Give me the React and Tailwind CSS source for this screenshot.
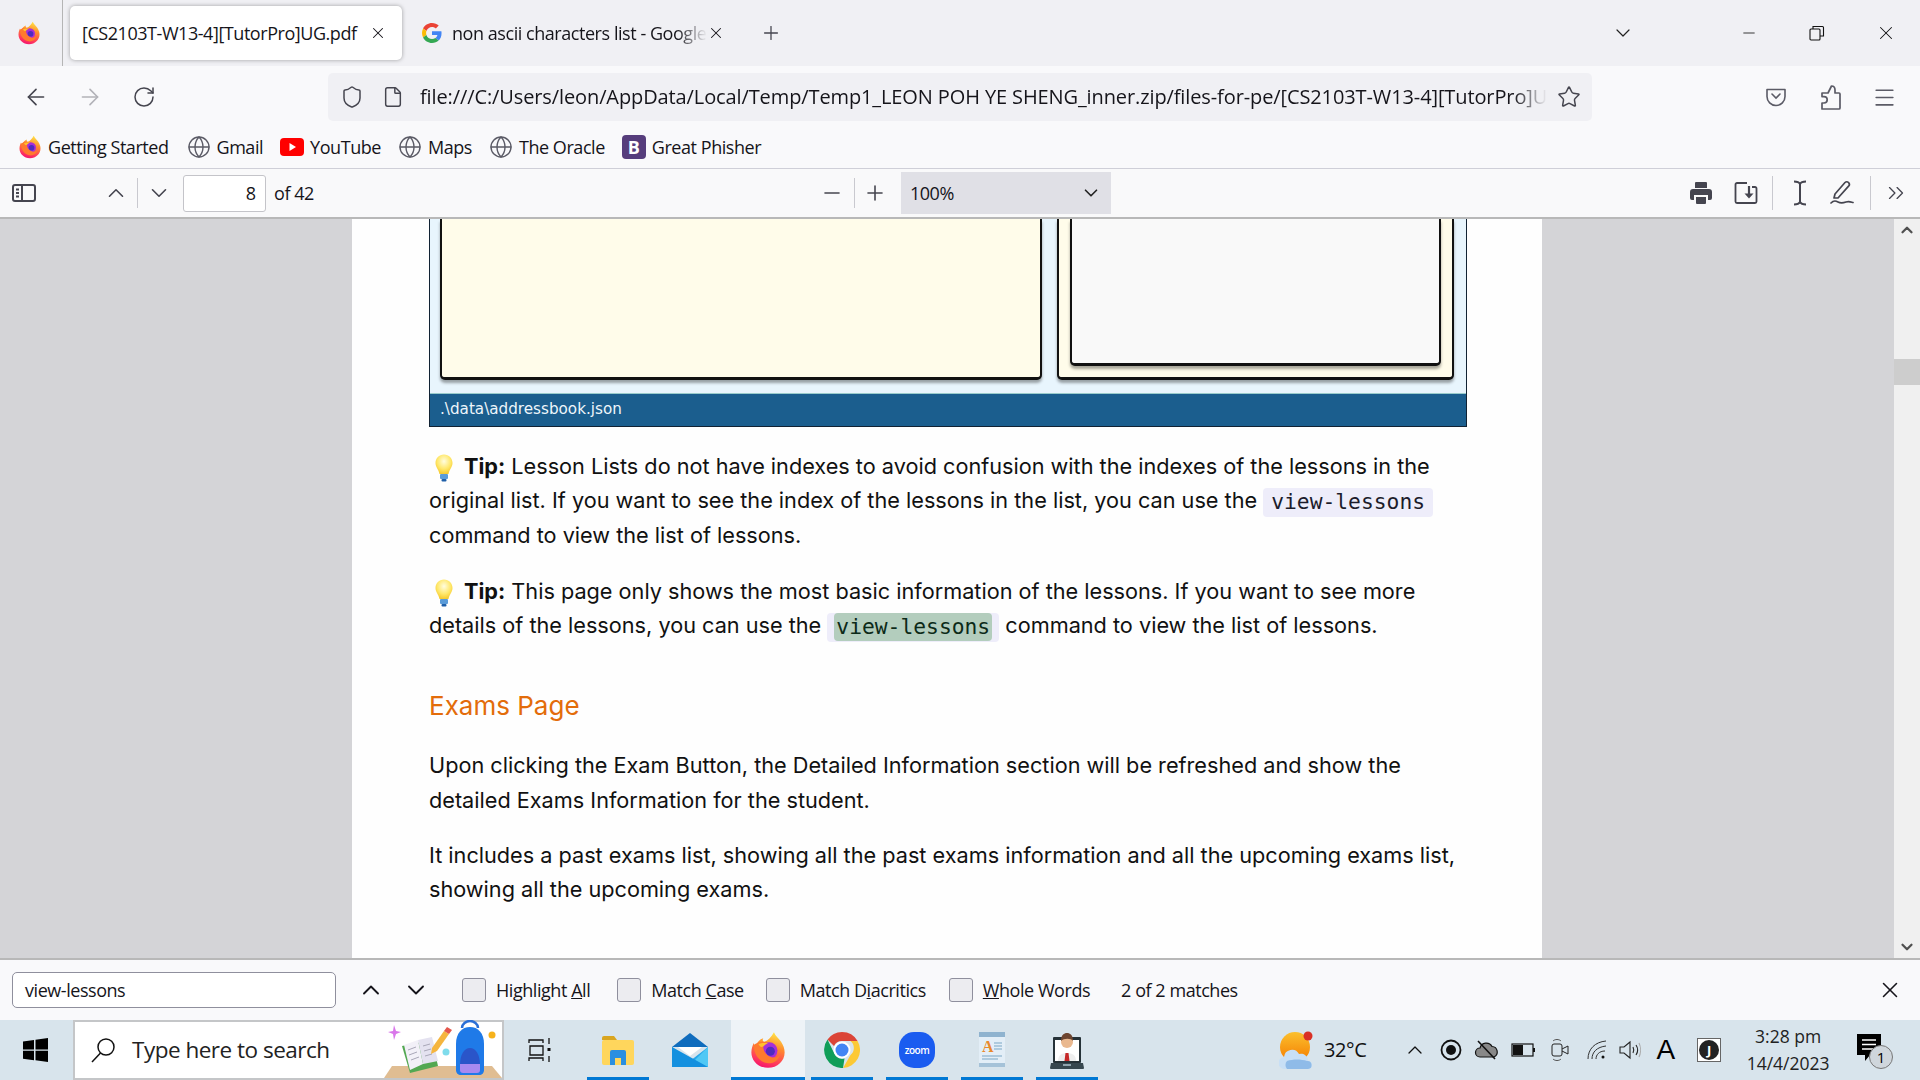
import { ArrowLeft, ArrowRight, RotateCw, Shield, File, Star, Menu, ChevronUp, ChevronDown, Plus, Minus, X, Globe, ChevronsRight } from "lucide-react";

function FirefoxLogo({ size = 24 }) {
  return (
    <svg width={size} height={size} viewBox="0 0 32 32">
      <defs>
        <linearGradient id="ffa" x1="0.7" y1="0" x2="0.4" y2="1">
          <stop offset="0" stopColor="#ffe847" />
          <stop offset="0.4" stopColor="#ff8a2e" />
          <stop offset="0.8" stopColor="#ff3b5c" />
          <stop offset="1" stopColor="#f5156c" />
        </linearGradient>
      </defs>
      <path d="M21 1c1 3 4 5 6 8 2 3 3 6 3 9 0 7-6 13-14 13S2 25 2 18c0-3 1-6 2-8 0 1 1 2 2 2 1-3 3-5 6-6-1 2 0 3 1 3 3-1 6-4 8-8z" fill="url(#ffa)" />
      <circle cx="17" cy="16.500" r="7" fill="#a62fd8" />
      <circle cx="18" cy="17" r="3.800" fill="#4f2bc0" />
      <path d="M4 12c3-3 8-4 12-2-3 0-4 2-4 3 0 4 3 8 7 9 3 1 5 0 7-2-1 5-6 8-11 7C9 26 4 20 4 12z" fill="#ff7a2e" />
      <path d="M8 11c2-1 5-1 8-1-2 1-3 2-4 3-2 1-3 0-4-2z" fill="#ffc02e" />
    </svg>
  );
}

function GoogleG() {
  return (
    <svg width="20" height="20" viewBox="0 0 48 48">
      <path fill="#EA4335" d="M24 9.500c3.500 0 6.700 1.300 9.200 3.400l6.900-6.900C35.900 2.400 30.300 0 24 0 14.600 0 6.500 5.400 2.600 13.200l8 6.200C12.500 13.700 17.800 9.500 24 9.500z" />
      <path fill="#4285F4" d="M46.900 24.500c0-1.600-.1-3.100-.4-4.500H24v9h12.900c-.6 3-2.200 5.500-4.800 7.200l7.700 6c4.500-4.200 7.100-10.300 7.100-17.700z" />
      <path fill="#FBBC05" d="M10.600 28.600c-.5-1.400-.8-3-.8-4.600s.3-3.200.8-4.600l-8-6.200C.9 16.500 0 20.100 0 24s.9 7.500 2.600 10.800l8-6.200z" />
      <path fill="#34A853" d="M24 48c6.500 0 11.900-2.100 15.800-5.800l-7.700-6c-2.100 1.400-4.900 2.300-8.100 2.300-6.200 0-11.500-4.200-13.400-9.900l-8 6.200C6.500 42.600 14.600 48 24 48z" />
    </svg>
  );
}

function SidebarIcon() {
  return (
    <svg width="24" height="18" viewBox="0 0 24 18" fill="none" stroke="#45454f" strokeWidth="2">
      <rect x="1" y="1" width="22" height="16" rx="2" />
      <path d="M10 1v16M4 5.500h3M4 9h3M4 12.500h3" />
    </svg>
  );
}

function Pocket() {
  return (
    <svg width="22" height="22" viewBox="0 0 22 22" fill="none" stroke="#5b5b66" strokeWidth="1.600">
      <path d="M2 3.500h18v7a9 9 0 0 1-18 0z" strokeLinejoin="round" />
      <path d="M7 8l4 4 4-4" strokeLinecap="round" />
    </svg>
  );
}

function ExtensionIcon() {
  return (
    <svg width="24" height="26" viewBox="0 0 24 26" fill="none" stroke="#5b5b66" strokeWidth="1.700" strokeLinejoin="round">
      <path d="M3 9h6l3.500-7c2.500 0 3.500 2 3.500 4v3h4a1 1 0 0 1 1 1v14a1 1 0 0 1-1 1H3v-6h2a3.200 3.200 0 0 0 0-6.400H3z" />
    </svg>
  );
}

function PrinterIcon() {
  return (
    <svg width="22" height="24" viewBox="0 0 22 24" fill="#45454f">
      <path d="M6 1h10a1 1 0 0 1 1 1v5H5V2a1 1 0 0 1 1-1z" />
      <path d="M3 8h16a3 3 0 0 1 3 3v6a2 2 0 0 1-2 2h-2v-5H4v5H2a2 2 0 0 1-2-2v-6a3 3 0 0 1 3-3z" />
      <path d="M6 16h10v6a1 1 0 0 1-1 1H7a1 1 0 0 1-1-1z" />
    </svg>
  );
}

function SavePdfIcon() {
  return (
    <svg width="24" height="24" viewBox="0 0 24 24" fill="none" stroke="#45454f" strokeWidth="1.800">
      <path d="M13 2H3a1.500 1.500 0 0 0-1.500 1.500v17A1.500 1.500 0 0 0 3 22h18a1.500 1.500 0 0 0 1.500-1.500V7.500A1.500 1.500 0 0 0 21 6h-3" />
      <path d="M15 5v9" strokeWidth="2.200" />
      <path d="M10.500 12.500h9L15 17.500z" fill="#45454f" stroke="none" />
    </svg>
  );
}

function TextCursorIcon() {
  return (
    <svg width="16" height="26" viewBox="0 0 16 26" fill="none" stroke="#45454f" strokeWidth="2">
      <path d="M2 1.500c3 0 5 .5 6 2.500 1-2 3-2.500 6-2.500M8 4v18M2 24.500c3 0 5-.5 6-2.500 1 2 3 2.500 6 2.500" />
    </svg>
  );
}

function DrawIcon() {
  return (
    <svg width="24" height="26" viewBox="0 0 24 26" fill="none" stroke="#45454f" strokeWidth="1.700" strokeLinejoin="round">
      <path d="M4 18l1-4L15 2.500c1-1 2.500-1 3.500 0s1.200 2.300.3 3.400L8 18z" />
      <path d="M1 23c3-3 5-2 7-1s5 1 8 0 5 0 7 .5" strokeLinecap="round" />
    </svg>
  );
}

function Bulb() {
  return (
    <svg width="24" height="28" viewBox="0 0 24 28" className="block">
      <defs>
        <radialGradient id="bulb" cx="0.5" cy="0.35" r="0.65">
          <stop offset="0" stopColor="#fffde0" />
          <stop offset="0.6" stopColor="#ffe86b" />
          <stop offset="1" stopColor="#f5c92e" />
        </radialGradient>
      </defs>
      <path d="M12 0.500c5 0 8.500 3.700 8.500 8.500 0 4-3 6-4 11h-9c-1-5-4-7-4-11C3.500 4.200 7 .5 12 .5z" fill="url(#bulb)" />
      <rect x="8" y="20" width="8" height="5" rx="1" fill="#5a9bd8" />
      <rect x="9.500" y="25" width="5" height="2.500" rx="1" fill="#1f5fa8" />
    </svg>
  );
}

function WinLogo() {
  return (
    <svg width="25" height="24" viewBox="0 0 25 24" fill="#000">
      <path d="M0 3.500l11-1.500v9.500H0zM12.500 1.800L25 0v11.500H12.500zM0 12.800h11v9.500L0 20.800zM12.500 12.800H25V24l-12.500-1.800z" />
    </svg>
  );
}

function SearchGlass() {
  return (
    <svg width="26" height="26" viewBox="0 0 26 26" fill="none" stroke="#111" strokeWidth="1.500">
      <circle cx="16" cy="10" r="8" />
      <path d="M10.500 16L2 25" />
    </svg>
  );
}

function SearchArt() {
  return (
    <svg width="118" height="58" viewBox="0 0 118 58" className="block">
      <path d="M0 58l8-12h100l10 12z" fill="#e0bd92" />
      <path d="M10 5l2 6 5 1-5 2-2 6-1-6-5-2 5-1z" fill="#d977ea" />
      <path d="M18 26l30-6 6 26-28 7z" fill="#53a852" />
      <path d="M20 25l14-5 5 24-13 6z" fill="#f2f0f8" />
      <path d="M34 20l14-3 6 24-15 3z" fill="#e4e2f0" />
      <path d="M24 30l8-3M25 35l8-3M27 40l8-3M39 26l7-2M40 31l7-2M41 36l7-2" stroke="#a9a7b8" strokeWidth="1" />
      <path d="M48 28l12-17 5 3-12 17-6 3z" fill="#f5b53f" />
      <path d="M60 11l3-4 5 3-3 4z" fill="#e4574c" />
      <circle cx="62" cy="32" r="3.500" fill="#7fdcec" />
      <path d="M78 8c0-4 4-7 8-7s8 3 8 7" fill="none" stroke="#2b6fd6" strokeWidth="2.500" />
      <path d="M72 24c0-11 6-17 14-17s14 6 14 17v26c0 3-2 5-5 5H77c-3 0-5-2-5-5z" fill="#1f7ae8" />
      <path d="M76 45c0-10 4-17 10-17s10 7 10 17v5H76z" fill="#2a55c9" />
      <path d="M76 44h20v6c0 2-1 3-3 3H79c-2 0-3-1-3-3z" fill="#a88af0" />
      <circle cx="108" cy="15" r="3.500" fill="#f6b21b" />
    </svg>
  );
}

function TaskView() {
  return (
    <svg width="26" height="26" viewBox="0 0 26 26" fill="none" stroke="#111" strokeWidth="1.300">
      <path d="M2 6V3h14v3M3 9h13v9H3zM2 24v-3h14v3" />
      <path d="M22 1v6M22 19v6" />
      <rect x="20.500" y="11" width="3" height="3" fill="#111" stroke="none" />
    </svg>
  );
}

function ExplorerIcon() {
  return (
    <svg width="32" height="30" viewBox="0 0 32 30">
      <path d="M0 3a2 2 0 0 1 2-2h10l3 4H0z" fill="#d9a520" />
      <rect x="0" y="5" width="32" height="25" rx="2" fill="#ffd65c" />
      <path d="M8 30V17a2 2 0 0 1 2-2h12a2 2 0 0 1 2 2v13h-5v-7h-6v7z" fill="#2a8fe0" />
    </svg>
  );
}

function MailIcon() {
  return (
    <svg width="36" height="34" viewBox="0 0 36 34">
      <path d="M18 0l18 14H0z" fill="#0f6cbd" />
      <path d="M6 14h24l-12 9z" fill="#fff" />
      <path d="M0 14l18 14 18-14v20H0z" fill="#28a8ea" />
      <path d="M36 14v20H16z" fill="#50c8f5" />
      <path d="M0 14v20h36L18 24z" fill="#1490df" />
    </svg>
  );
}

function ChromeIcon() {
  return (
    <svg width="36" height="36" viewBox="0 0 36 36">
      <path d="M18 0a18 18 0 0 1 15.600 9H18a9 9 0 0 0-8 5L3.500 7.500A18 18 0 0 1 18 0z" fill="#db4437" />
      <path d="M33.600 9A18 18 0 0 1 19 36l7.500-13a9 9 0 0 0 0-14z" fill="#fcc934" />
      <path d="M3.500 7.500L10.500 22a9 9 0 0 0 10 4.500L19 36A18 18 0 0 1 3.500 7.500z" fill="#0f9d58" />
      <circle cx="18" cy="18" r="8.500" fill="#fff" />
      <circle cx="18" cy="18" r="6.500" fill="#4285f4" />
    </svg>
  );
}

function ZoomIcon() {
  return (
    <div className="flex h-[36px] w-[36px] items-center justify-center rounded-[15px] bg-[#1a5cf0] text-[10px] font-semibold tracking-tighter text-white">
      zoom
    </div>
  );
}

function NotesIcon() {
  return (
    <svg width="28" height="36" viewBox="0 0 28 36">
      <rect x="1" y="1" width="26" height="34" rx="1" fill="#e3eef7" />
      <rect x="1" y="0" width="26" height="5" fill="#8fb3cf" />
      <rect x="1" y="31" width="26" height="4" fill="#a5c2d8" />
      <text x="4" y="20" fontSize="16" fontFamily="Liberation Serif" fontWeight="700" fill="#e98a2c">A</text>
      <path d="M16 11h8M16 14h8M16 17h8M4 24h20M4 27h16" stroke="#7ba5c6" strokeWidth="1.200" />
    </svg>
  );
}

function PersonIcon() {
  return (
    <svg width="34" height="38" viewBox="0 0 34 38">
      <rect x="3" y="6" width="28" height="26" rx="1" fill="#263238" />
      <rect x="5" y="9" width="24" height="21" fill="#fff" />
      <path d="M8 30c0-6 4-8 9-8s9 2 9 8z" fill="#eee" />
      <path d="M15.500 22h3l1 8h-5z" fill="#c62828" />
      <circle cx="17" cy="11" r="6" fill="#e9b88f" />
      <path d="M11 10c0-6 3-8 6-8s6 2 6 8c-2-3-9-3-12 0z" fill="#6d4530" />
      <path d="M1 32h32l1 5a1 1 0 0 1-1 1H1a1 1 0 0 1-1-1z" fill="#37474f" />
      <rect x="13" y="33" width="8" height="2" fill="#90a4ae" />
    </svg>
  );
}

function WeatherIcon() {
  return (
    <svg width="36" height="38" viewBox="0 0 36 38">
      <defs>
        <linearGradient id="sun" x1="0" y1="0" x2="0" y2="1">
          <stop offset="0" stopColor="#fbc02d" />
          <stop offset="1" stopColor="#f57c00" />
        </linearGradient>
      </defs>
      <circle cx="16" cy="16" r="15" fill="url(#sun)" />
      <circle cx="29" cy="5" r="4.500" fill="#d93025" />
      <path d="M6 38a6 6 0 0 1-1-12 8 8 0 0 1 15-3 7 7 0 0 1 9 7 4 4 0 0 1 0 8z" fill="#c8dff5" />
      <path d="M8 38a6 6 0 0 1 0-8c6-2 14-2 20 0a4 4 0 0 1 1 8z" fill="#8fbbe8" />
    </svg>
  );
}

function TrayRecord() {
  return (
    <svg width="22" height="22" viewBox="0 0 22 22" fill="none">
      <circle cx="11" cy="11" r="9.500" stroke="#111" strokeWidth="1.800" />
      <circle cx="11" cy="11" r="5" fill="#111" />
    </svg>
  );
}

function TrayCloud() {
  return (
    <svg width="26" height="20" viewBox="0 0 26 20" fill="#888" stroke="#111" strokeWidth="1.200">
      <path d="M6 17a4.500 4.500 0 0 1 0-9 6.500 6.500 0 0 1 12-1.500A5.500 5.500 0 0 1 20 17z" />
      <path d="M4 1l17 18" fill="none" strokeWidth="1.600" />
    </svg>
  );
}

function TrayBattery() {
  return (
    <svg width="24" height="14" viewBox="0 0 24 14" fill="none">
      <rect x="1" y="1" width="21" height="12" stroke="#111" strokeWidth="1.200" />
      <rect x="2" y="2" width="10" height="10" fill="#111" />
      <rect x="22" y="5" width="2" height="4" fill="#111" />
    </svg>
  );
}

function TrayCamera() {
  return (
    <svg width="18" height="24" viewBox="0 0 18 24" fill="none" stroke="#222" strokeWidth="1">
      <rect x="1" y="6" width="10" height="12" rx="2" />
      <path d="M11 11l6-3v8l-6-3" />
      <path d="M2 3c2-2 6-2 8 0M2 21c2 2 6 2 8 0" stroke="#555" />
    </svg>
  );
}

function TrayWifi() {
  return (
    <svg width="20" height="20" viewBox="0 0 20 20" fill="none" stroke="#333" strokeWidth="1">
      <path d="M1 19C1 9 8 2 19 1M5 19c0-7 5-12 14-13M9 19c0-4 3-8 9-8" />
      <circle cx="16" cy="17" r="1.500" fill="#111" stroke="none" />
    </svg>
  );
}

function TraySpeaker() {
  return (
    <svg width="22" height="20" viewBox="0 0 22 20" fill="none" stroke="#222" strokeWidth="1.100">
      <path d="M1 7h4l6-5v16l-6-5H1z" />
      <path d="M14 7c1 2 1 4 0 6M17 5c2 3 2 7 0 10" />
      <path d="M20 3c2 4 2 10 0 14" stroke="#aaa" />
    </svg>
  );
}

function TrayJ() {
  return (
    <div className="flex h-[24px] w-[24px] items-center justify-center border border-[#666] bg-white">
      <div className="flex h-[20px] w-[20px] items-center justify-center rounded-full bg-[#222] text-[13px] font-bold leading-none text-white">J</div>
    </div>
  );
}

function NotificationIcon() {
  return (
    <div className="relative h-[32px] w-[30px]">
      <svg width="24" height="28" viewBox="0 0 24 28">
        <path d="M0 0h24v21H13l-5 6v-6H0z" fill="#000" />
        <path d="M5 6h14M5 10.500h14M5 15h14" stroke="#fff" strokeWidth="1.300" />
      </svg>
      <div className="absolute left-[12px] top-[11px] flex h-[24px] w-[24px] items-center justify-center rounded-full border border-[#777] bg-[#cfd6dc] text-[15px] text-black">1</div>
    </div>
  );
}

function Sep({ className = "" }) {
  return <div className={`w-px bg-[#c9c9cf] ${className}`} />;
}

function Bookmark({ icon, label, className = "" }) {
  return (
    <div className={`flex items-center gap-[6px] ${className}`}>
      {icon}
      <span className="text-[18px] tracking-[-0.45px] text-[#15141a]">{label}</span>
    </div>
  );
}

function FindCheck({ before, u, after, className = "" }) {
  return (
    <label className={`flex shrink-0 items-center gap-[10px] ${className}`}>
      <span className="h-[24px] w-[24px] rounded-[3px] border border-[#8f8f9d] bg-[#ececf0]" />
      <span className="whitespace-nowrap text-[18px] tracking-[-0.45px] text-[#15141a]">
        {before}
        <span className="underline">{u}</span>
        {after}
      </span>
    </label>
  );
}

function TaskIcon({ children, width, running, active }) {
  return (
    <div className={`relative flex h-full shrink-0 items-center justify-center ${active ? "bg-[#eef3f7]" : ""}`} style={{ width }}>
      {children}
      {running && <div className="absolute inset-x-0 bottom-0 h-[3px] bg-[#0078d4]" />}
    </div>
  );
}

function CodePill({ highlight }) {
  return (
    <span className={`-my-[4px] inline-block h-[29px] rounded-[4px] bg-[#eeedfa] align-middle font-['DejaVu_Sans_Mono',monospace] text-[21.300px] leading-[28px] text-[#1c1c2b] ${highlight ? "px-[7px]" : "px-[8px]"}`}>
      {highlight ? <span className="inline-block h-[28px] rounded-[4px] bg-[#b3cdbd] px-[2px] leading-[27px] text-[#0c2a18]">view-lessons</span> : "view-lessons"}
    </span>
  );
}

function TipBulb() {
  return (
    <span className="-my-[6px] ml-[3px] mr-[8px] inline-block align-middle">
      <Bulb />
    </span>
  );
}

function ScreenshotCrop() {
  return (
    <div className="flex h-[208px] w-[1038px] flex-col border-x border-b border-[#123] bg-[#e8f5fd]">
      <div className="flex h-[175px] shrink-0 gap-[15px] border-b border-[#9cc] pl-[10px] pr-[12px]">
        <div className="h-[161px] w-[602px] rounded-b-[5px] border-x-2 border-b-[3px] border-[#111] bg-[#fffcea] shadow-[0_3px_3px_rgba(0,0,0,0.35)]" />
        <div className="h-[161px] flex-1 rounded-b-[5px] border-x-2 border-b-[3px] border-[#111] bg-[#fffcea] px-[11px] shadow-[0_3px_3px_rgba(0,0,0,0.35)]">
          <div className="h-[147px] rounded-b-[5px] border-x-2 border-b-[3px] border-[#111] bg-[#f9f9f9] shadow-[0_3px_3px_rgba(0,0,0,0.35)]" />
        </div>
      </div>
      <div className="flex min-h-0 flex-1 items-center bg-[#1b5e8e] pl-[10px] font-['DejaVu_Sans',sans-serif] text-[15.200px] leading-none text-[#eef6fb]">
        .\data\addressbook.json
      </div>
    </div>
  );
}

export default function App() {
  return (
    <div className="flex h-[1080px] w-[1920px] flex-col overflow-hidden bg-white font-['Open_Sans','Noto_Sans',sans-serif]">
      {/* Tab strip */}
      <div className="flex h-[66px] shrink-0 items-center bg-[#f0f0f4]">
        <div className="flex h-full w-[63px] items-center justify-center border-r border-[#b5b5b5] pr-[4px]">
          <FirefoxLogo size={24} />
        </div>
        <div className="ml-[7px] flex h-[54px] w-[332px] items-center rounded-[5px] bg-white pl-[12px] shadow-[0_0_4px_rgba(0,0,0,0.35)]">
          <span className="w-[287px] whitespace-nowrap text-[18px] tracking-[-0.45px] text-[#15141a]">[CS2103T-W13-4][TutorPro]UG.pdf</span>
          <X size={18} strokeWidth={1.4} color="#15141a" />
        </div>
        <div className="ml-[20px] flex items-center">
          <GoogleG />
          <span className="ml-[10px] w-[255px] overflow-hidden whitespace-nowrap text-[18px] tracking-[-0.45px] text-[#15141a] [mask-image:linear-gradient(to_right,black_88%,transparent)]">non ascii characters list - Google Search</span>
          <X size={18} strokeWidth={1.4} color="#15141a" />
        </div>
        <Plus size={22} strokeWidth={1.4} color="#45454f" className="ml-[35px]" />
        <ChevronDown size={24} strokeWidth={1.2} color="#222" className="ml-[829px]" />
        <Minus size={18} strokeWidth={1.1} color="#111" className="ml-[105px]" />
        <svg width="16" height="16" viewBox="0 0 16 16" fill="none" stroke="#111" strokeWidth="1.100" className="ml-[51px]">
          <rect x="1" y="4" width="10" height="11" rx="1" />
          <path d="M4 4V1.500h9.500a1 1 0 0 1 1 1V11H11" />
        </svg>
        <X size={22} strokeWidth={1.1} color="#111" className="ml-[50px]" />
      </div>

      {/* Nav bar */}
      <div className="flex h-[58px] shrink-0 items-center bg-[#f9f9fb] pt-[4px]">
        <ArrowLeft size={26} strokeWidth={1.5} color="#45454f" className="ml-[23px]" />
        <ArrowRight size={26} strokeWidth={1.5} color="#b2b2b8" className="ml-[28px]" />
        <RotateCw size={24} strokeWidth={1.5} color="#45454f" className="ml-[29px]" />
        <div className="ml-[172px] flex h-[48px] w-[1264px] shrink-0 items-center rounded-[5px] bg-[#f0f0f4] pl-[12px]">
          <Shield size={24} strokeWidth={1.5} color="#45454f" />
          <File size={22} strokeWidth={1.6} color="#45454f" className="ml-[18px]" />
          <span className="ml-[16px] w-[1127px] overflow-hidden whitespace-nowrap text-[20px] tracking-[-0.11px] text-[#15141a] [mask-image:linear-gradient(to_right,black_97%,transparent)]">file:///C:/Users/leon/AppData/Local/Temp/Temp1_LEON POH YE SHENG_inner.zip/files-for-pe/[CS2103T-W13-4][TutorPro]UG.pdf</span>
          <Star size={24} strokeWidth={1.5} color="#45454f" className="ml-[10px]" />
        </div>
        <div className="ml-[173px]"><Pocket /></div>
        <div className="ml-[32px]"><ExtensionIcon /></div>
        <Menu size={25} strokeWidth={1.6} color="#5b5b66" className="ml-[29px]" />
      </div>

      {/* Bookmarks */}
      <div className="flex h-[45px] shrink-0 items-center border-b border-[#cfcfd8] bg-[#f9f9fb] pl-[18px] pt-[2px]">
        <Bookmark icon={<FirefoxLogo size={24} />} label="Getting Started" />
        <Bookmark icon={<Globe size={24} strokeWidth={1.4} color="#5b5b66" />} label="Gmail" className="ml-[18px]" />
        <Bookmark
          icon={
            <svg width="24" height="18" viewBox="0 0 24 18">
              <rect width="24" height="18" rx="4" fill="#f00" />
              <path d="M9.500 5l6.500 4-6.500 4z" fill="#fff" />
            </svg>
          }
          label="YouTube"
          className="ml-[17px]"
        />
        <Bookmark icon={<Globe size={24} strokeWidth={1.4} color="#5b5b66" />} label="Maps" className="ml-[17px]" />
        <Bookmark icon={<Globe size={24} strokeWidth={1.4} color="#5b5b66" />} label="The Oracle" className="ml-[17px]" />
        <Bookmark
          icon={<span className="flex h-[24px] w-[24px] items-center justify-center rounded-[4px] bg-[#563d7c] text-[18px] font-bold leading-none text-white">B</span>}
          label="Great Phisher"
          className="ml-[17px]"
        />
      </div>

      {/* PDF toolbar */}
      <div className="flex h-[50px] shrink-0 items-center border-b-[2px] border-[#b8b8b8] bg-[#f9f9fa]">
        <div className="ml-[12px]"><SidebarIcon /></div>
        <ChevronUp size={26} strokeWidth={1.5} color="#45454f" className="ml-[67px]" />
        <Sep className="ml-[8px] h-[30px]" />
        <ChevronDown size={26} strokeWidth={1.5} color="#45454f" className="ml-[8px]" />
        <div className="ml-[11px] flex h-[37px] w-[83px] items-center justify-end rounded-[3px] border border-[#c4c4c9] bg-white pr-[9px] text-[18px] text-[#15141a]">8</div>
        <span className="ml-[8px] text-[18px] tracking-[-0.45px] text-[#15141a]">of 42</span>
        <Minus size={24} strokeWidth={1.6} color="#45454f" className="ml-[506px]" />
        <Sep className="ml-[10px] h-[30px]" />
        <Plus size={24} strokeWidth={1.6} color="#45454f" className="ml-[8px]" />
        <div className="ml-[14px] flex h-[42px] w-[210px] shrink-0 items-center justify-between bg-[#e0e0e6] pl-[9px] pr-[9px] text-[18px] tracking-[-0.45px] text-[#15141a]">
          100%
          <ChevronDown size={22} strokeWidth={1.8} color="#222" />
        </div>
        <div className="ml-[579px]"><PrinterIcon /></div>
        <div className="ml-[22px]"><SavePdfIcon /></div>
        <Sep className="ml-[14px] h-[34px]" />
        <div className="ml-[19px]"><TextCursorIcon /></div>
        <div className="ml-[22px]"><DrawIcon /></div>
        <Sep className="ml-[16px] h-[34px]" />
        <ChevronsRight size={26} strokeWidth={1.2} color="#45454f" className="ml-[12px]" />
      </div>

      {/* Viewer */}
      <div className="flex min-h-0 flex-1 bg-[#d4d4d7]">
        <div className="flex flex-1 justify-center">
          <div className="h-full w-[1190px] bg-[#fefefe] pl-[77px] pr-[74px] font-['Inter',sans-serif] text-[21.680px] leading-[34.300px] text-[#111]">
            <ScreenshotCrop />
            <p className="mt-[22px] w-[1039px]">
              <TipBulb />
              <strong className="font-bold">Tip:</strong> Lesson Lists do not have indexes to avoid confusion with the indexes of the lessons in the original list. If you want to see the index of the lessons in the list, you can use the <CodePill /> command to view the list of lessons.
            </p>
            <p className="mt-[22px] w-[1039px]">
              <TipBulb />
              <strong className="font-bold">Tip:</strong> This page only shows the most basic information of the lessons. If you want to see more details of the lessons, you can use the <CodePill highlight /> command to view the list of lessons.
            </p>
            <h2 className="mt-[44px] text-[26px] leading-[40px] text-[#e36c0a]">Exams Page</h2>
            <p className="mt-[22px]">Upon clicking the Exam Button, the Detailed Information section will be refreshed and show the detailed Exams Information for the student.</p>
            <p className="mt-[21px]">It includes a past exams list, showing all the past exams information and all the upcoming exams list, showing all the upcoming exams.</p>
          </div>
        </div>
        <div className="flex w-[26px] shrink-0 flex-col items-center bg-[#f0f0f0] py-[2px]">
          <ChevronUp size={18} strokeWidth={3} color="#505050" />
          <div className="mt-[120px] h-[26px] w-full bg-[#cdcdcd]" />
          <ChevronDown size={18} strokeWidth={3} color="#505050" className="mt-auto" />
        </div>
      </div>

      {/* Find bar */}
      <div className="flex h-[62px] shrink-0 items-center border-t-[2px] border-[#b8b8b8] bg-[#f9f9fb]">
        <div className="ml-[12px] flex h-[36px] w-[324px] shrink-0 items-center rounded-[5px] border border-[#8f8f9d] bg-white pl-[12px] text-[18px] tracking-[-0.45px] text-[#15141a]">view-lessons</div>
        <ChevronUp size={28} strokeWidth={1.6} color="#15141a" className="ml-[21px]" />
        <ChevronDown size={28} strokeWidth={1.6} color="#15141a" className="ml-[17px]" />
        <FindCheck before="Highlight " u="A" after="ll" className="ml-[32px]" />
        <FindCheck before="Match " u="C" after="ase" className="ml-[27px]" />
        <FindCheck before="Match D" u="i" after="acritics" className="ml-[22px]" />
        <FindCheck before="" u="W" after="hole Words" className="ml-[23px]" />
        <span className="ml-[31px] whitespace-nowrap text-[18px] tracking-[-0.45px] text-[#15141a]">2 of 2 matches</span>
        <X size={26} strokeWidth={1.4} color="#15141a" className="ml-auto mr-[17px]" />
      </div>

      {/* Taskbar */}
      <div className="flex h-[60px] shrink-0 items-center bg-[#d8e4ec]">
        <div className="ml-[23px]"><WinLogo /></div>
        <div className="ml-[25px] flex h-[60px] w-[431px] shrink-0 items-center border-2 border-[#c4c6c8] bg-white pl-[15px]">
          <SearchGlass />
          <span className="ml-[16px] flex-1 whitespace-nowrap text-[22.500px] tracking-[-0.5px] text-[#222]">Type here to search</span>
          <div className="self-end"><SearchArt /></div>
        </div>
        <div className="ml-[23px]"><TaskView /></div>
        <div className="ml-[34px] flex h-full shrink-0 items-center">
          <TaskIcon width={62} running><ExplorerIcon /></TaskIcon>
          <TaskIcon width={82}><MailIcon /></TaskIcon>
          <TaskIcon width={74} running active><FirefoxLogo size={38} /></TaskIcon>
          <div className="w-[6px]" />
          <TaskIcon width={62} running><ChromeIcon /></TaskIcon>
          <div className="w-[13px]" />
          <TaskIcon width={62} running><ZoomIcon /></TaskIcon>
          <div className="w-[13px]" />
          <TaskIcon width={62} running><NotesIcon /></TaskIcon>
          <div className="w-[13px]" />
          <TaskIcon width={62} running><PersonIcon /></TaskIcon>
        </div>
        <div className="ml-[181px]"><WeatherIcon /></div>
        <span className="ml-[9px] text-[20px] tracking-[-0.4px] text-[#111]">32°C</span>
        <ChevronUp size={24} strokeWidth={1.3} color="#111" className="ml-[37px]" />
        <div className="ml-[13px]"><TrayRecord /></div>
        <div className="ml-[12px]"><TrayCloud /></div>
        <div className="ml-[11px]"><TrayBattery /></div>
        <div className="ml-[16px]"><TrayCamera /></div>
        <div className="ml-[18px]"><TrayWifi /></div>
        <div className="ml-[12px]"><TraySpeaker /></div>
        <span className="ml-[15px] font-['Liberation_Sans',sans-serif] text-[28px] leading-none text-black">A</span>
        <div className="ml-[22px]"><TrayJ /></div>
        <div className="ml-[22px] flex w-[90px] shrink-0 flex-col items-center text-[17.500px] leading-[27px] text-[#222]">
          <span>3:28 pm</span>
          <span>14/4/2023</span>
        </div>
        <div className="ml-[24px]"><NotificationIcon /></div>
      </div>
    </div>
  );
}
